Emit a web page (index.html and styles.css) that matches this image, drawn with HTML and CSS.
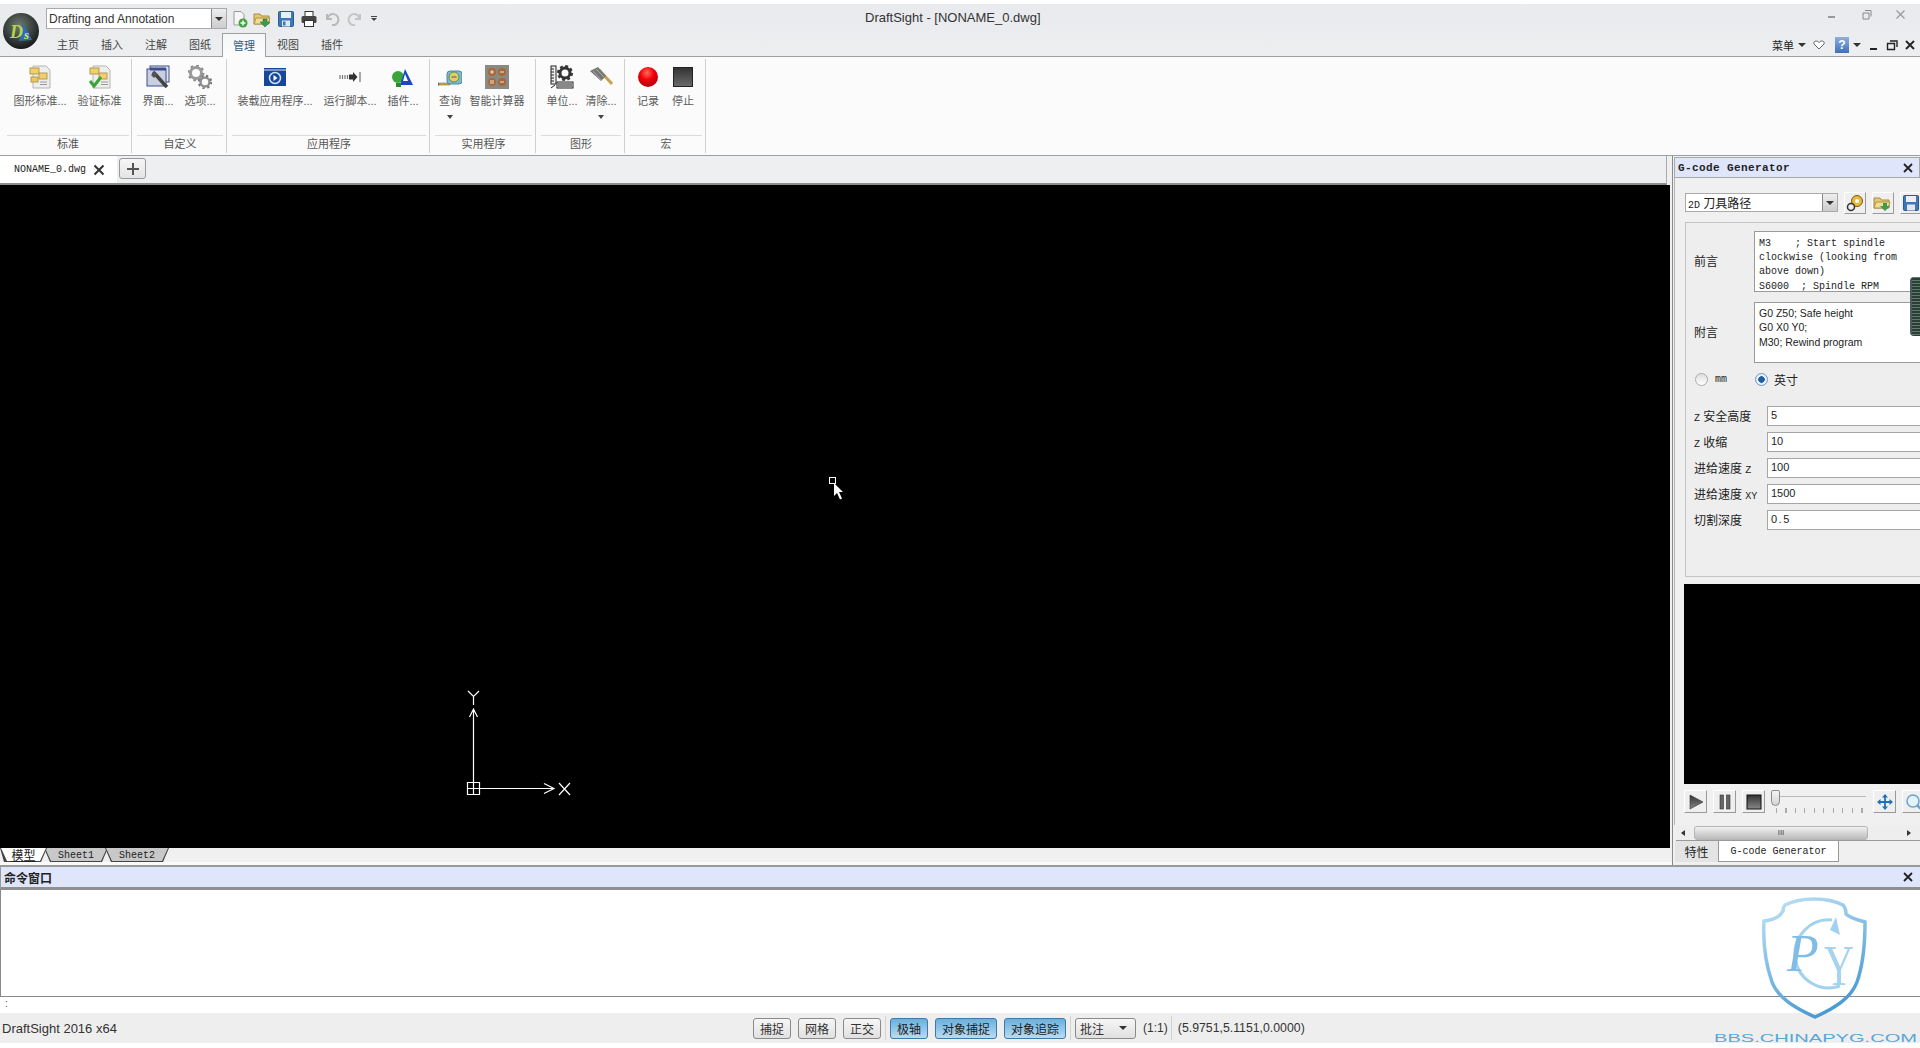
FILE: index.html
```html
<!DOCTYPE html>
<html lang="zh">
<head>
<meta charset="utf-8">
<title>DraftSight - [NONAME_0.dwg]</title>
<link rel="stylesheet" href="styles.css">
</head>
<body>
<div class="app">
  <header class="titlebar">
    <div class="logo">
      <svg width="38" height="38" viewBox="0 0 38 38">
        <defs><radialGradient id="ball" cx=".45" cy=".35" r=".7"><stop offset="0" stop-color="#6f7a72"/><stop offset=".7" stop-color="#2c3230"/><stop offset="1" stop-color="#111"/></radialGradient></defs>
        <circle cx="19" cy="19" r="18" fill="url(#ball)"/>
        <path d="M21 11 L30 28 L17 29Z" fill="#2c6fb0"/>
        <text x="8" y="26" class="logo-d">D</text>
        <text x="22" y="27" class="logo-s">s</text>
      </svg>
    </div>
    <div class="title-main">
      <div class="row-top">
        <div class="qat">
          <div class="combo-main"><span class="combo-text">Drafting and Annotation</span><span class="combo-btn"><i class="caret"></i></span></div>
          <span class="qi"><svg width="18" height="18" viewBox="0 0 18 18"><path d="M3 1.500h7l3 3V15H3z" fill="#f6f6f6" stroke="#9a9a9a"/><circle cx="12" cy="13" r="4.500" fill="#3fa33f"/><path d="M12 10.500v5M9.500 13h5" stroke="#fff" stroke-width="1.500"/></svg></span>
          <span class="qi"><svg width="20" height="18" viewBox="0 0 20 18"><path d="M1 4h6l1.500 2H16v8H1z" fill="#e6c873" stroke="#a78a3c"/><path d="M3 8h14l-2 6H1z" fill="#f2dc96" stroke="#b0944a"/><path d="M10 9h4v3h3l-5 5-5-5h3z" fill="#3f9a50" stroke="#2a6d37" stroke-width=".5"/></svg></span>
          <span class="qi"><svg width="18" height="18" viewBox="0 0 18 18"><rect x="1.500" y="1.500" width="15" height="15" rx="1" fill="#3f78b8" stroke="#2c5a92"/><rect x="4" y="2" width="10" height="6" fill="#e8f0f8"/><rect x="5" y="10.500" width="8" height="6" fill="#dfe7ef"/><rect x="6" y="11.500" width="2.500" height="4" fill="#3f78b8"/></svg></span>
          <span class="qi"><svg width="18" height="18" viewBox="0 0 18 18"><rect x="5" y="1.500" width="8" height="5" fill="#fff" stroke="#333"/><rect x="1.500" y="6" width="15" height="7" rx="1.500" fill="#444"/><rect x="4.500" y="10.500" width="9" height="6" fill="#fff" stroke="#333"/></svg></span>
          <span class="qi"><svg width="16" height="16" viewBox="0 0 16 16"><path d="M3 3v5h5M3.500 8A5.500 5.500 0 1 1 8 14" fill="none" stroke="#b8b8b8" stroke-width="2"/></svg></span>
          <span class="qi"><svg width="16" height="16" viewBox="0 0 16 16"><path d="M13 3v5H8M12.500 8A5.500 5.500 0 1 0 8 14" fill="none" stroke="#c4c4c4" stroke-width="2"/></svg></span>
          <span class="qi-more"><i class="dash"></i><i class="caret-sm"></i></span>
        </div>
        <div class="app-title">DraftSight - [NONAME_0.dwg]</div>
        <div class="win-ctrls">
          <svg width="14" height="14" viewBox="0 0 14 14"><path d="M2 9h7" stroke="#999" stroke-width="2"/></svg>
          <svg width="14" height="14" viewBox="0 0 14 14"><path d="M5 2.500h6v6M3 5h6v6H3z" fill="none" stroke="#888"/></svg>
          <svg width="14" height="14" viewBox="0 0 14 14"><path d="M2.500 2.500l8 8M10.500 2.500l-8 8" stroke="#999" stroke-width="1.200"/></svg>
        </div>
      </div>
      <div class="row-tabs">
        <nav class="rtabs">
          <span class="rtab">主页</span><span class="rtab">插入</span><span class="rtab">注解</span><span class="rtab">图纸</span><span class="rtab active">管理</span><span class="rtab">视图</span><span class="rtab">插件</span>
        </nav>
        <div class="menu-ctrls">
          <span class="menu-text">菜单</span><i class="caret c-menu"></i>
          <svg class="heart" width="12" height="10" viewBox="0 0 12 10"><path d="M6 9L1 4c-1-2 1-3 2-3s2.500.5 3 1.500C6.500 1.500 8 1 9 1s3 1 2 3z" fill="#fff" stroke="#666"/></svg>
          <span class="help">?</span><i class="caret c-help"></i>
          <svg class="mini" width="14" height="14" viewBox="0 0 14 14"><path d="M3 11h7" stroke="#222" stroke-width="2"/></svg>
          <svg class="mini" width="14" height="14" viewBox="0 0 14 14"><path d="M5 3h7v6M2.500 5.500h7v6h-7z" fill="none" stroke="#222" stroke-width="1.400"/></svg>
          <svg class="mini" width="14" height="14" viewBox="0 0 14 14"><path d="M3 3l8 8M11 3l-8 8" stroke="#222" stroke-width="1.800"/></svg>
        </div>
      </div>
    </div>
  </header>

  <section class="ribbon">
    <div class="rgroup g-std">
      <div class="rbtns">
        <div class="rbtn"><svg width="24" height="24" viewBox="0 0 24 24"><path d="M5 1h13l4 4v18H5z" fill="#eee" stroke="#b5b5b5"/><rect x="2" y="3" width="9" height="6" fill="#f0cf70" stroke="#b69a4a"/><rect x="11" y="8" width="8" height="6" fill="#f0cf70" stroke="#b69a4a"/><rect x="3" y="12" width="7" height="5" fill="#e8c768" stroke="#b69a4a"/><path d="M12 17h7M12 19.500h7" stroke="#999"/></svg><span>图形标准...</span></div>
        <div class="rbtn"><svg width="24" height="24" viewBox="0 0 24 24"><path d="M5 1h13l4 4v18H5z" fill="#eee" stroke="#b5b5b5"/><rect x="2" y="3" width="9" height="6" fill="#f0cf70" stroke="#b69a4a"/><rect x="11" y="8" width="8" height="6" fill="#f0cf70" stroke="#b69a4a"/><path d="M13 17h7M13 19.500h7" stroke="#999"/><path d="M2 16l4 5 7-9" fill="none" stroke="#3aa535" stroke-width="3"/></svg><span>验证标准</span></div>
      </div>
      <div class="rlabel">标准</div>
    </div>
    <div class="rgroup g-custom">
      <div class="rbtns">
        <div class="rbtn"><svg width="24" height="24" viewBox="0 0 24 24"><rect x="4" y="1" width="19" height="16" fill="#dfe4ee" stroke="#3e4f8c"/><rect x="1" y="4" width="19" height="17" fill="#c9cfe0" stroke="#3e4f8c"/><path d="M4 4h16" stroke="#3e4f8c" stroke-width="3"/><path d="M7 7l3 3 8 9 3 3" stroke="#444" stroke-width="3.500" fill="none"/><path d="M5 10l3-3 3 3-3 3z" fill="#555"/></svg><span>界面...</span></div>
        <div class="rbtn"><svg width="24" height="24" viewBox="0 0 24 24"><circle cx="8" cy="8" r="5.500" fill="none" stroke="#9a9a9a" stroke-width="3"/><circle cx="8" cy="8" r="7.500" fill="none" stroke="#8a8a8a" stroke-width="2" stroke-dasharray="2.500 3.400"/><circle cx="17" cy="17" r="4.500" fill="none" stroke="#8f8f8f" stroke-width="2.500"/><circle cx="17" cy="17" r="6.300" fill="none" stroke="#777" stroke-width="2" stroke-dasharray="2.200 2.800"/></svg><span>选项...</span></div>
      </div>
      <div class="rlabel">自定义</div>
    </div>
    <div class="rgroup g-app">
      <div class="rbtns">
        <div class="rbtn"><svg width="24" height="24" viewBox="0 0 24 24"><rect x="1" y="3" width="22" height="18" fill="#18479a"/><path d="M1 5h22" stroke="#dfe7f2"/><circle cx="12" cy="13" r="5.500" fill="none" stroke="#cfe3fa" stroke-width="1.500"/><path d="M10.500 10l4 3-4 3z" fill="#fff"/></svg><span>装载应用程序...</span></div>
        <div class="rbtn"><svg width="24" height="24" viewBox="0 0 24 24"><path d="M2 10v4M4.500 10v4M7 10v4M9.500 10v4" stroke="#777" stroke-width="1.200"/><path d="M11 9.500h4V7l4.500 5-4.500 5v-2.500h-4z" fill="#333"/><path d="M22 7v10" stroke="#555"/></svg><span>运行脚本...</span></div>
        <div class="rbtn"><svg width="24" height="24" viewBox="0 0 24 24"><circle cx="7" cy="12" r="6" fill="#3aa63a"/><path d="M14 4l8 16H9z" fill="#1a49c8"/><path d="M14 9l3 7h-5z" fill="#fff"/><path d="M5 18h5v4H5z" fill="#2a8a2a"/></svg><span>插件...</span></div>
      </div>
      <div class="rlabel">应用程序</div>
    </div>
    <div class="rgroup g-util">
      <div class="rbtns">
        <div class="rbtn"><svg width="24" height="24" viewBox="0 0 24 24"><path d="M0 18h12v2H1z" fill="#d8b040" stroke="#555" stroke-width=".5"/><path d="M0 21v-3" stroke="#333"/><rect x="9" y="6" width="15" height="13" rx="3" fill="#7fb8c8" stroke="#4c8a9c"/><circle cx="16" cy="12" r="5" fill="#e0d060" stroke="#5a8a70"/><path d="M13.500 12h5" stroke="#555"/></svg><span>查询</span><i class="caret rcaret"></i></div>
        <div class="rbtn"><svg width="24" height="24" viewBox="0 0 24 24"><rect x="0" y="0" width="24" height="24" fill="#8a8a82"/><circle cx="7" cy="7" r="4" fill="#a8683a"/><circle cx="17" cy="7" r="4" fill="#a8683a"/><circle cx="7" cy="17" r="4" fill="#a8683a"/><circle cx="17" cy="17" r="4" fill="#a8683a"/><path d="M5 7h4M7 5v4M15 7h4M5 16h4M5 18h4M15 17h4" stroke="#f2e4d0"/></svg><span>智能计算器</span></div>
      </div>
      <div class="rlabel">实用程序</div>
    </div>
    <div class="rgroup g-draw">
      <div class="rbtns">
        <div class="rbtn"><svg width="24" height="24" viewBox="0 0 24 24"><rect x="1" y="1" width="5" height="18" fill="#eee" stroke="#222"/><path d="M1 4h3M1 7h3M1 10h3M1 13h3M1 16h3" stroke="#222"/><rect x="7" y="17" width="16" height="6" fill="#eee" stroke="#222"/><path d="M9 18v4M11 18v4M13 18v4M15 18v4M17 18v4M19 18v4M21 18v4" stroke="#222"/><circle cx="15" cy="8" r="5" fill="none" stroke="#333" stroke-width="3"/><circle cx="15" cy="8" r="7" fill="none" stroke="#333" stroke-width="2" stroke-dasharray="3 2.500"/><path d="M1 23l4-3" stroke="#222"/></svg><span>单位...</span></div>
        <div class="rbtn"><svg width="24" height="24" viewBox="0 0 24 24"><path d="M10 5l13 14" stroke="#caa050" stroke-width="3"/><path d="M1 6l8-4 8 9-5 5z" fill="#777"/><path d="M4 6l8 9M7 4l8 8" stroke="#aaa"/></svg><span>清除...</span><i class="caret rcaret"></i></div>
      </div>
      <div class="rlabel">图形</div>
    </div>
    <div class="rgroup g-macro">
      <div class="rbtns">
        <div class="rbtn"><svg width="24" height="24" viewBox="0 0 24 24"><defs><radialGradient id="red" cx=".45" cy=".3" r=".7"><stop offset="0" stop-color="#ff6a5a"/><stop offset=".5" stop-color="#f00008"/><stop offset="1" stop-color="#b00010"/></radialGradient></defs><circle cx="12" cy="12" r="10" fill="url(#red)"/></svg><span>记录</span></div>
        <div class="rbtn"><svg width="24" height="24" viewBox="0 0 24 24"><defs><linearGradient id="stop" x1="0" y1="0" x2="0" y2="1"><stop offset="0" stop-color="#333"/><stop offset="1" stop-color="#6a6a6a"/></linearGradient></defs><rect x="2.500" y="2.500" width="19" height="19" fill="url(#stop)" stroke="#222"/></svg><span>停止</span></div>
      </div>
      <div class="rlabel">宏</div>
    </div>
  </section>

  <main class="mid">
    <div class="workspace">
      <div class="doctabs">
        <div class="doctab"><span class="doctab-name">NONAME_0.dwg</span><svg width="12" height="12" viewBox="0 0 12 12"><path d="M1.500 1.500l9 9M10.500 1.500l-9 9" stroke="#333" stroke-width="2"/></svg></div>
        <div class="docadd"><svg width="14" height="14" viewBox="0 0 14 14"><path d="M7 1v12M1 7h12" stroke="#555" stroke-width="2"/></svg></div>
      </div>
      <div class="canvas">
        <svg class="ucs" width="110" height="115" viewBox="0 0 110 115">
          <g fill="none" stroke="#fff" stroke-width="1.200">
            <path d="M6.500 92.500h12v12h-12zM12.500 92.500v12M6.500 98.500h12"/>
            <path d="M12.500 92V19M8.500 27l4-8 4 8"/>
            <path d="M7 1l5.500 5.500L18 1M12.500 6.500V15"/>
            <path d="M19 98.500h74M83 93.500l10 5-10 5"/>
            <path d="M98 93l11 12M109 93l-11 12"/>
          </g>
        </svg>
        <svg class="cursor" width="20" height="28" viewBox="0 0 20 28">
          <rect x=".5" y=".5" width="6" height="6" fill="none" stroke="#fff"/>
          <path d="M5 6l9 9-4 0 3 6.500-2 1-3-6.500-3 3z" fill="#fff"/>
        </svg>
      </div>
      <div class="sheets">
        <span class="sheet active"><u class="sheet-text">模型</u></span><span class="sheet"><span class="sheet-text">Sheet1</span></span><span class="sheet"><span class="sheet-text">Sheet2</span></span>
      </div>
    </div>
    <aside class="panel">
      <div class="p-title"><span class="p-title-text">G-code Generator</span><svg width="12" height="12" viewBox="0 0 12 12"><path d="M2 2l8 8M10 2l-8 8" stroke="#222" stroke-width="1.800"/></svg></div>
      <div class="p-body">
        <div class="p-toprow">
          <div class="p-combo"><span class="p-combo-text"><b class="mono">2D</b> 刀具路径</span><span class="combo-btn"><i class="caret"></i></span></div>
          <span class="raise"><svg width="18" height="18" viewBox="0 0 18 18"><circle cx="11" cy="7" r="5.500" fill="#e8b838" stroke="#7a5a10"/><circle cx="11" cy="7" r="2" fill="#fff"/><circle cx="5" cy="13" r="3.500" fill="#eee" stroke="#333" stroke-width="1.500"/></svg></span>
          <span class="raise"><svg width="20" height="18" viewBox="0 0 20 18"><path d="M1 4h6l1.500 2H16v8H1z" fill="#e6c873" stroke="#a78a3c"/><path d="M3 8h14l-2 6H1z" fill="#f2dc96" stroke="#b0944a"/><path d="M10 9h4v3h3l-5 5-5-5h3z" fill="#3f9a50"/></svg></span>
          <span class="raise"><svg width="18" height="18" viewBox="0 0 18 18"><rect x="1.500" y="1.500" width="15" height="15" rx="1" fill="#3f78b8" stroke="#2c5a92"/><rect x="4" y="2" width="10" height="6" fill="#e8f0f8"/><rect x="5" y="10.500" width="8" height="6" fill="#dfe7ef"/></svg></span>
        </div>
        <div class="p-group">
          <div class="p-area-row"><label class="p-lab">前言</label><div class="p-area mono-area">M3    ; Start spindle
clockwise (looking from
above down)
S6000  ; Spindle RPM</div></div>
          <div class="p-area-row"><label class="p-lab">附言</label><div class="p-area sans-area">G0 Z50; Safe height
G0 X0 Y0;
M30; Rewind program</div></div>
          <div class="p-radios">
            <span class="radio"></span><span class="mono r-mm">mm</span>
            <span class="radio on"></span><span class="r-in">英寸</span>
          </div>
          <div class="p-fields">
            <div class="p-field"><label class="p-flab"><b class="mono">Z</b> 安全高度</label><div class="p-input">5</div></div>
            <div class="p-field"><label class="p-flab"><b class="mono">Z</b> 收缩</label><div class="p-input">10</div></div>
            <div class="p-field"><label class="p-flab">进给速度 <b class="mono">Z</b></label><div class="p-input">100</div></div>
            <div class="p-field"><label class="p-flab">进给速度 <b class="mono">XY</b></label><div class="p-input">1500</div></div>
            <div class="p-field"><label class="p-flab">切割深度</label><div class="p-input spaced">0.5</div></div>
          </div>
        </div>
        <div class="preview"></div>
        <div class="p-ctrls">
          <span class="raise big"><svg width="18" height="18" viewBox="0 0 18 18"><defs><linearGradient id="pl" x1="0" y1="0" x2="0" y2="1"><stop offset="0" stop-color="#333"/><stop offset="1" stop-color="#888"/></linearGradient></defs><path d="M3 2l13 7-13 7z" fill="url(#pl)" stroke="#333" stroke-width=".6"/></svg></span>
          <span class="raise big"><svg width="18" height="18" viewBox="0 0 18 18"><rect x="4" y="2" width="3.500" height="14" fill="#666" stroke="#333" stroke-width=".6"/><rect x="10.500" y="2" width="3.500" height="14" fill="#666" stroke="#333" stroke-width=".6"/></svg></span>
          <span class="raise big"><svg width="18" height="18" viewBox="0 0 18 18"><rect x="2" y="2" width="14" height="14" fill="url(#pl)" stroke="#111"/></svg></span>
          <div class="slider"><i class="thumb"></i><i class="track"></i><i class="ticks"></i></div>
          <span class="raise big"><svg width="18" height="18" viewBox="0 0 18 18"><path d="M9 1l3 3.500H6zM9 17l3-3.500H6zM1 9l3.500-3v6zM17 9l-3.500-3v6z" fill="#1d6fc0"/><path d="M9 4v10M4 9h10" stroke="#1d6fc0" stroke-width="1.800"/></svg></span>
          <span class="raise big"><svg width="18" height="18" viewBox="0 0 18 18"><circle cx="8" cy="8" r="6" fill="#e6f2fa" stroke="#6aa4cc" stroke-width="1.500"/><path d="M12 12l5 5" stroke="#6aa4cc" stroke-width="2.500"/></svg></span>
        </div>
      </div>
      <div class="hscroll"><i class="arr-l"></i><div class="hthumb">III</div><i class="arr-r"></i></div>
      <div class="p-tabs"><span class="p-tab">特性</span><span class="p-tab active">G-code Generator</span></div>
      <div class="grip"></div>
    </aside>
  </main>

  <section class="command">
    <div class="cmd-head"><span>命令窗口</span><svg width="12" height="12" viewBox="0 0 12 12"><path d="M2 2l8 8M10 2l-8 8" stroke="#222" stroke-width="1.800"/></svg></div>
    <div class="cmd-body"></div>
    <div class="cmd-input">:</div>
  </section>

  <footer class="status">
    <div class="st-name">DraftSight 2016 x64</div>
    <div class="st-btns">
      <span class="st-btn">捕捉</span><span class="st-btn">网格</span><span class="st-btn">正交</span>
      <i class="st-sep"></i>
      <span class="st-btn on">极轴</span><span class="st-btn on">对象捕捉</span><span class="st-btn on">对象追踪</span>
      <i class="st-sep"></i>
      <span class="st-btn st-drop">批注<i class="caret"></i></span>
      <span class="st-txt">(1:1)</span>
      <i class="st-sep s3"></i>
      <span class="st-txt st-coord">(5.9751,5.1151,0.0000)</span>
    </div>
  </footer>
  <div class="foot"></div>
</div>

<svg class="watermark" width="220" height="158" viewBox="0 0 220 158">
  <defs>
    <linearGradient id="sh" x1=".2" y1="0" x2=".6" y2="1"><stop offset="0" stop-color="#b8def4"/><stop offset="1" stop-color="#4698d4"/></linearGradient>
  </defs>
  <path d="M115 127C95 118 78 108 72 92C65 72 63 50 64 31C72 30 80 27 83 21C83 17 84 16 85 15C95 10 105 9 114 9C125 9 135 11 143 15C145 17 146 20 146 24C150 28 158 30 165 32C165 55 163 75 157 92C151 108 135 118 115 127Z" fill="none" stroke="url(#sh)" stroke-width="3.500"/>
  <path d="M132 30A34 34 0 1 0 140 96" fill="none" stroke="#a3d2ee" stroke-width="3"/>
  <path d="M130 40l6-13 4 18z" fill="#a3d2ee"/>
  <text x="87" y="81" class="wm-p">P</text>
  <text x="124" y="95" class="wm-y" textLength="30" lengthAdjust="spacingAndGlyphs">Y</text>
  <text x="14" y="152" class="wm-t" textLength="203" lengthAdjust="spacingAndGlyphs">BBS.CHINAPYG.COM</text>
</svg>
</body>
</html>
```
FILE: styles.css
```css
* { box-sizing: border-box; }
html, body { margin: 0; padding: 0; background: #fff; }
body { font-family: "Liberation Sans", "Noto Sans CJK SC", sans-serif; font-size: 12px; color: #222; }
i { display: block; }
.app { width: 1920px; height: 1048px; display: flex; flex-direction: column; overflow: hidden; }
.mono { font-family: "Liberation Mono", "Noto Sans CJK SC", monospace; font-weight: 400; font-size: 10px; }
.caret { width: 0; height: 0; border-left: 4px solid transparent; border-right: 4px solid transparent; border-top: 4px solid #333; }

/* title */
.titlebar { height: 56px; flex: none; display: flex; border-top: 4px solid #fff; background: linear-gradient(#e8eaed, #eceef0); }
.logo { width: 46px; flex: none; display: flex; align-items: center; padding-left: 2px; padding-top: 2px; }
.logo-d { font: italic 700 18px "Liberation Serif", serif; fill: #b6d64a; }
.logo-s { font: italic 700 13px "Liberation Serif", serif; fill: #d8e070; }
.title-main { flex: 1; display: flex; flex-direction: column; min-width: 0; }
.row-top { height: 29px; display: flex; align-items: center; }
.qat { width: 819px; flex: none; display: flex; align-items: center; }
.combo-main { width: 181px; height: 21px; display: flex; border: 1px solid #aaa; background: #fff; align-items: center; justify-content: space-between; margin-right: 1px; }
.combo-text { padding-left: 2px; font-size: 12px; color: #333; }
.combo-btn { width: 15px; height: 100%; background: linear-gradient(#eee, #ccc); border-left: 1px solid #888; display: flex; align-items: center; justify-content: center; flex: none; }
.qi { width: 23px; height: 21px; display: flex; align-items: center; justify-content: center; }
.qi-more { width: 16px; display: flex; flex-direction: column; align-items: center; gap: 1px; }
.dash { width: 6px; height: 1px; background: #444; }
.caret-sm { width: 0; height: 0; border-left: 3px solid transparent; border-right: 3px solid transparent; border-top: 3px solid #444; }
.app-title { font-size: 13px; color: #333; white-space: nowrap; margin-bottom: 3px; }
.win-ctrls { margin-left: auto; display: flex; gap: 20px; padding-right: 12px; margin-bottom: 7px; }
.row-tabs { height: 23px; display: flex; align-items: center; }
.rtabs { display: flex; height: 100%; }
.rtab { width: 44px; height: 23px; display: flex; align-items: center; justify-content: center; font-size: 11px; color: #444; padding-bottom: 2px; }
.rtab.active { height: 24px; background: linear-gradient(#f4f6f8, #fcfcfc); border: 1px solid #a0a0a0; border-bottom: 0; position: relative; z-index: 2; color: #2f5d8a; }
.menu-ctrls { margin-left: auto; display: flex; align-items: center; height: 100%; padding-right: 3px; }
.menu-text { font-size: 11px; color: #222; margin-right: 4px; }
.c-menu { margin-right: 7px; }
.heart { margin-right: 10px; }
.help { width: 14px; height: 16px; background: linear-gradient(#8fb0e0, #3e6fb8); color: #fff; font-weight: 700; font-size: 12px; display: flex; align-items: center; justify-content: center; margin-right: 4px; }
.c-help { margin-right: 2px; }
.mini { margin-left: 4px; }

/* ribbon */
.ribbon { height: 100px; flex: none; display: flex; border-top: 1px solid #9c9ea2; border-bottom: 1px solid #9c9ea2; background: #fbfbfb; }
.rgroup { display: flex; flex-direction: column; border-right: 1px solid #cfcfcf; margin: 2px 0; flex: none; }
.rbtns { flex: 1; display: grid; align-items: start; }
.rbtn { display: flex; flex-direction: column; align-items: center; padding-top: 6px; white-space: nowrap; font-size: 11px; color: #5a5a5a; min-width: 0; }
.rbtn span { margin-top: 5px; line-height: 14px; }
.rcaret { margin-top: 7px; border-top-color: #444; border-left-width: 3px; border-right-width: 3px; }
.rlabel { height: 18px; margin: 0 3px 0 5px; border-top: 1px solid #dcdcdc; text-align: center; font-size: 11px; line-height: 14px; color: #555; padding-top: 1px; }
.g-std { width: 132px; }
.g-std .rbtns { padding-left: 10px; grid-template-columns: 60px 59px; }
.g-std .rlabel { margin: 0 2px 0 7px; }
.g-custom { width: 95px; }
.g-custom .rbtns { padding-left: 5px; grid-template-columns: 42px 42px; }
.g-app { width: 203px; }
.g-app .rbtns { padding-left: 6px; grid-template-columns: 84px 66px 40px; }
.g-util { width: 106px; }
.g-util .rbtns { padding-left: 1px; grid-template-columns: 38px 56px; }
.g-draw { width: 89px; }
.g-draw .rbtns { padding-left: 6px; grid-template-columns: 40px 38px; }
.g-macro { width: 81px; }
.g-macro .rbtns { padding-left: 5px; grid-template-columns: 36px 34px; }

/* middle */
.mid { height: 709px; flex: none; display: flex; background: #f0f0f0; }
.workspace { width: 1672px; flex: none; display: flex; flex-direction: column; }
.doctabs { height: 29px; margin-right: 5px; display: flex; align-items: flex-start; border-bottom: 2px solid #8d8d8d; background: #eeeff0; flex: none; border-right: 1px solid #aaa; }
.doctab { width: 117px; height: 27px; background: #fff; display: flex; align-items: center; gap: 7px; padding-left: 14px; }
.doctab-name { font-family: "Liberation Mono", monospace; font-size: 10px; color: #222; }
.docadd { width: 27px; height: 21px; margin: 2px 0 0 2px; border: 1px solid #999; border-radius: 3px; background: linear-gradient(#f6f6f6, #e4e4e4); display: flex; align-items: center; justify-content: center; }
.canvas { height: 663px; margin-right: 2px; background: #000; position: relative; flex: none; }
.ucs { position: absolute; left: 461px; top: 505px; }
.cursor { position: absolute; left: 829px; top: 292px; }
.sheets { height: 17px; display: flex; background: #f0f0f0; font-family: "Liberation Mono", "Noto Sans CJK SC", monospace; font-size: 10px; flex: none; border-bottom: 3px solid #fafafa; }
.sheet { width: 64px; height: 14px; margin-left: -3px; background: #444; clip-path: polygon(0 0, 100% 0, calc(100% - 6px) 100%, 6px 100%); display: flex; align-items: center; justify-content: center; color: #222; position: relative; }
.sheet::before { content: ""; position: absolute; inset: 0 1px 1px 1px; background: #c8c8c8; clip-path: polygon(0 0, 100% 0, calc(100% - 6px) 100%, 6px 100%); }
.sheet.active { width: 47px; margin-left: 0; font-size: 12px; clip-path: polygon(0 0, 100% 0, calc(100% - 6px) 100%, 4px 100%); z-index: 1; }
.sheet.active::before { background: #fff; }
.sheet-text { position: relative; z-index: 1; }

/* panel */
.panel { width: 248px; flex: none; border-left: 1px solid #8a8a8a; padding: 0 0 2px 1px; display: flex; flex-direction: column; position: relative; overflow: hidden; }
.p-title { height: 21px; margin-top: 1px; flex: none; display: flex; align-items: center; justify-content: space-between; padding: 0 5px 0 3px; background: #dfe5fa; border: 1px solid #a8a8a8; font-family: "Liberation Mono", monospace; font-weight: 700; font-size: 11px; letter-spacing: .4px; color: #222; }
.p-body { flex: 1; padding: 15px 0 0 9px; border-left: 1px solid #b5b5b5; min-height: 0; }
.p-toprow { height: 19px; display: flex; align-items: center; width: 300px; margin-left: 1px; }
.p-combo { width: 153px; height: 19px; border: 1px solid #aaa; background: #fff; display: flex; align-items: center; justify-content: space-between; margin-right: 6px; }
.p-combo-text { padding-left: 2px; font-size: 12px; color: #222; }
.raise { width: 22px; height: 22px; background: #efefef; border: 1px solid; border-color: #fff #9a9a9a #9a9a9a #fff; display: flex; align-items: center; justify-content: center; margin-right: 6px; flex: none; }
.p-group { width: 300px; height: 355px; margin: 10px 0 0 1px; border: 1px solid #c4c4c4; background: #eeeeee; padding-top: 8px; font-size: 12px; }
.p-area-row { display: flex; align-items: center; height: 61px; margin-bottom: 10px; }
.p-lab { width: 68px; padding-left: 8px; flex: none; font-size: 12px; color: #222; margin-top: -2px; }
.p-area { flex: 1; height: 61px; background: #fff; border: 1px solid #9a9a9a; padding: 4px 4px; white-space: pre; overflow: hidden; color: #222; }
.mono-area { font-family: "Liberation Mono", monospace; font-size: 10px; line-height: 14.200px; padding-top: 5px; }
.sans-area { font-family: "Liberation Sans", sans-serif; font-size: 10.500px; line-height: 14.300px; padding-top: 3px; }
.p-radios { height: 18px; margin-top: -3px; display: flex; align-items: center; padding-left: 9px; }
.radio { width: 13px; height: 13px; border-radius: 50%; border: 1px solid #aaa; background: linear-gradient(#ddd, #fff); flex: none; }
.radio.on { background: radial-gradient(circle, #1d5fa8 0 3px, #e8f0f8 3.500px); border-color: #7a95b0; }
.r-mm { width: 40px; margin-left: 7px; font-size: 10px; }
.r-in { margin-left: 6px; color: #222; }
.p-fields { margin-top: 18px; display: flex; flex-direction: column; gap: 6px; }
.p-field { display: flex; align-items: center; height: 20px; }
.p-flab { width: 81px; padding-left: 8px; flex: none; font-size: 12px; color: #222; white-space: nowrap; margin-top: -2px; }
.p-input { flex: 1; height: 20px; background: #fff; border: 1px solid #a5a5a5; padding-left: 3px; font-size: 11px; line-height: 17px; color: #222; }
.spaced { letter-spacing: 1.500px; }
.preview { width: 300px; height: 200px; margin-top: 7px; background: #000; }
.p-ctrls { height: 23px; margin-top: 6px; display: flex; width: 300px; }
.raise.big { width: 23px; height: 23px; }
.slider { width: 98px; height: 23px; margin: 0 5px 0 -1px; position: relative; flex: none; }
.thumb { position: absolute; left: 1px; top: 0; width: 9px; height: 16px; background: linear-gradient(#f4f4f4, #d4d4d4); border: 1px solid #8a8a8a; border-radius: 2px 2px 5px 5px; z-index: 1; }
.track { position: absolute; left: 8px; right: 2px; top: 6px; height: 1px; background: #bbb; }
.ticks { position: absolute; left: 6px; right: 1px; top: 18px; height: 5px; background: repeating-linear-gradient(90deg, #aaa 0 1px, transparent 1px 9.500px); }
.hscroll { height: 16px; flex: none; display: flex; align-items: center; background: #eee; border-bottom: 1px solid #9a9a9a; padding-left: 5px; margin-left: 2px; width: 244px; }
.arr-l { width: 0; height: 0; border-top: 3px solid transparent; border-bottom: 3px solid transparent; border-right: 4px solid #333; }
.arr-r { width: 0; height: 0; border-top: 3px solid transparent; border-bottom: 3px solid transparent; border-left: 4px solid #333; margin-left: 39px; }
.hthumb { width: 174px; height: 14px; margin-left: 9px; background: linear-gradient(#f2f2f2, #d0d0d0 60%, #bbb); border: 1px solid #b5b5b5; border-radius: 3px; font-size: 8px; line-height: 12px; text-align: center; color: #444; }
.p-tabs { height: 22px; flex: none; display: flex; margin-left: 1px; background: #f0f0f0; }
.p-tab { width: 43px; height: 21px; background: #e4e4e4; display: flex; align-items: center; justify-content: center; font-size: 12px; color: #222; }
.p-tab.active { width: 121px; background: #fff; border: 1px solid #999; border-top: 0; font-family: "Liberation Mono", monospace; font-size: 10px; }
.grip { position: absolute; left: 237px; top: 121px; width: 12px; height: 59px; border-radius: 4px 0 0 4px; background: repeating-linear-gradient(#5d7c6a 0 1px, #2d3c36 1px 3px); border-left: 2px solid #4a5a60; }

/* command */
.command { height: 148px; flex: none; display: flex; flex-direction: column; border-top: 2px solid #9a9a9a; }
.cmd-head { height: 23px; flex: none; display: flex; align-items: center; justify-content: space-between; background: #dfe5fa; border-bottom: 3px solid #8f8f8f; border-left: 1px solid #9a9a9a; padding: 0 6px 0 3px; font-weight: 700; font-size: 12px; font-family: "Noto Sans CJK SC", sans-serif; color: #222; }
.cmd-body { height: 107px; flex: none; background: #fff; border-left: 1px solid #888; border-bottom: 1px solid #888; }
.cmd-input { flex: 1; background: #fff; padding-left: 5px; font-size: 10px; line-height: 14px; color: #555; }

/* status */
.status { height: 30px; flex: none; display: flex; align-items: center; background: #eeeeee; }
.st-name { width: 753px; flex: none; padding-left: 2px; font-size: 13px; color: #333; }
.st-btns { display: flex; align-items: center; }
.st-btn { height: 21px; padding: 0 6px; margin-right: 7px; border: 1px solid #8a8a8a; border-radius: 3px; background: linear-gradient(#f6f6f6, #e0e0e0); display: flex; align-items: center; font-size: 12px; color: #333; white-space: nowrap; }
.st-btn.on { background: linear-gradient(#68b0e0, #b8dcf2); border-color: #3c7aa8; color: #222; }
.st-sep { width: 1px; height: 24px; background: #d4d4d4; margin: 0 4px 0 -3px; }
.st-sep.s3 { margin: 0 6px 0 3px; }
.st-drop { width: 61px; justify-content: space-between; padding: 0 8px 0 4px; }
.st-txt { font-size: 12px; color: #333; white-space: nowrap; }
.st-coord { font-size: 12.300px; }
.foot { flex: 1; background: #fff; }

/* watermark */
.watermark { position: absolute; left: 1700px; top: 890px; }
.wm-p { font: italic 400 52px "Liberation Serif", serif; fill: #7fbde6; }
.wm-y { font: 400 56px "Liberation Serif", serif; fill: #a6d3ee; }
.wm-t { font: 400 11px "Liberation Sans", sans-serif; fill: #5aa6d8; }
```
